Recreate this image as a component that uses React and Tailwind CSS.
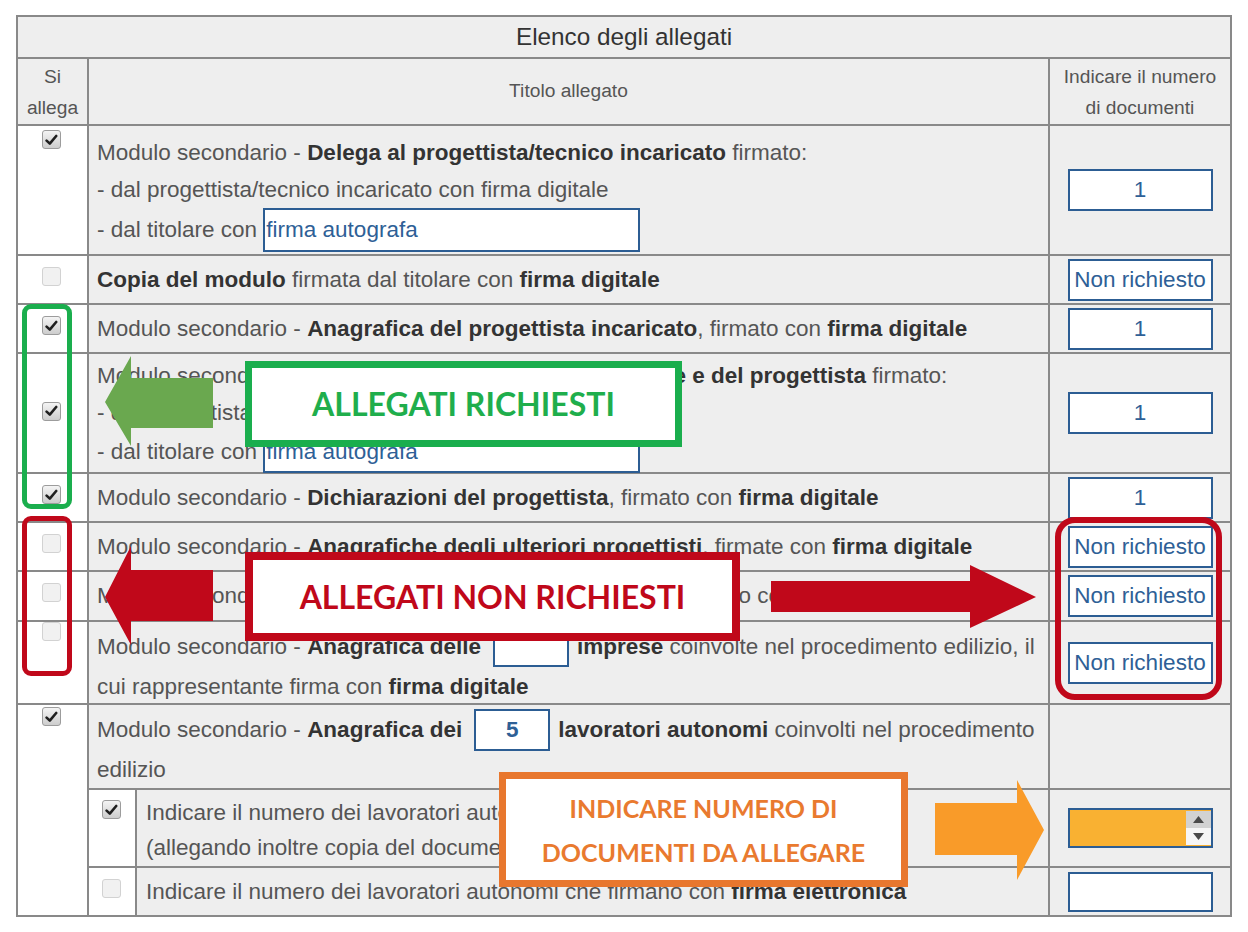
import React from 'react';

function Box({ checked }) {
  if (!checked) {
    return <span className="block h-[19px] w-[19px] rounded-[3px] border border-[#d2d2d2] bg-[#f1f1f1]" />;
  }
  return (
    <span className="flex h-[19px] w-[19px] items-center justify-center rounded-[3px] border border-[#9c9c9c] bg-linear-to-b from-[#f4f4f4] to-[#cdcdcd]">
      <svg width="13" height="12" viewBox="0 0 13 12">
        <path d="M1.6 6.6 L4.8 9.6 L11.2 2" stroke="#1f1f1f" strokeWidth="2.6" fill="none" strokeLinecap="round" strokeLinejoin="round" />
      </svg>
    </span>
  );
}

function Num({ children }) {
  return (
    <div className="flex h-[42px] w-[145px] items-center justify-center whitespace-nowrap border-2 border-[#2c5d93] bg-white text-[#2e6096]">
      {children}
    </div>
  );
}

function B({ children }) {
  return <b className="font-bold text-[#333]">{children}</b>;
}

function Row({ checked, boxPos, textPos, children, right }) {
  return (
    <>
      <div className={`flex justify-center border-b-2 border-r-2 border-[#898989] bg-white pr-[3px] ${boxPos}`}>
        <Box checked={checked} />
      </div>
      <div className={`col-span-2 border-b-2 border-r-2 border-[#898989] bg-[#eeeeee] pl-2 ${textPos}`}>{children}</div>
      <div className="flex items-center justify-center border-b-2 border-r-2 border-[#898989] bg-[#eeeeee]">{right}</div>
    </>
  );
}

function Spin() {
  return (
    <div className="flex h-[40px] w-[145px] border-2 border-[#2c5d93] bg-[#f9b132]">
      <div className="flex-1" />
      <div className="flex w-[25px] flex-col py-px">
        <div className="flex flex-1 items-center justify-center bg-[#d2d2d2]">
          <svg width="11" height="7" viewBox="0 0 11 7"><polygon points="0,7 5.5,0 11,7" fill="#4a4a4a" /></svg>
        </div>
        <div className="flex flex-1 items-center justify-center bg-[#f6f6f6]">
          <svg width="11" height="7" viewBox="0 0 11 7"><polygon points="0,0 11,0 5.5,7" fill="#4a4a4a" /></svg>
        </div>
      </div>
    </div>
  );
}

export default function App() {
  return (
    <div className="relative min-h-[932px] w-[1248px] bg-white font-['Liberation_Sans',Arial,sans-serif] text-[22.5px] text-[#555]">
      <div className="pl-[16px] pt-[15px]">
        <div className="grid w-[1216px] grid-cols-[71px_48px_913px_182px] grid-rows-[42px_67px_130px_49px_49px_120px_49px_49px_50px_83px_85px_78px_49px] border-l-2 border-t-2 border-[#898989]">
          {/* intestazione */}
          <div className="col-span-4 flex items-center justify-center border-b-2 border-r-2 border-[#898989] bg-[#eeeeee] text-[24.3px] text-[#333]">
            Elenco degli allegati
          </div>
          <div className="flex flex-col items-center justify-center border-b-2 border-r-2 border-[#898989] bg-[#eeeeee] text-[19.2px] leading-[31px]">
            <span>Si</span>
            <span>allega</span>
          </div>
          <div className="col-span-2 flex items-center justify-center border-b-2 border-r-2 border-[#898989] bg-[#eeeeee] text-[19.2px]">
            Titolo allegato
          </div>
          <div className="flex flex-col items-center justify-center border-b-2 border-r-2 border-[#898989] bg-[#eeeeee] text-[19.2px] leading-[31px]">
            <span>Indicare il numero</span>
            <span>di documenti</span>
          </div>

          <Row checked boxPos="items-start pt-[4px]" textPos="pt-[8px]" right={<Num>1</Num>}>
            <div className="leading-[37px]">
              Modulo secondario - <B>Delega al progettista/tecnico incaricato</B> firmato:
            </div>
            <div className="leading-[37px]">- dal progettista/tecnico incaricato con firma digitale</div>
            <div className="flex h-[44px] items-center whitespace-pre">
              {'- dal titolare con '}
              <span className="flex h-[44px] w-[377px] items-center border-2 border-[#2c5d93] bg-white pl-[1px] text-[#2e6096]">firma autografa</span>
            </div>
          </Row>

          <Row boxPos="items-center pb-[6px]" textPos="flex items-center" right={<Num>Non richiesto</Num>}>
            <div>
              <B>Copia del modulo</B> firmata dal titolare con <B>firma digitale</B>
            </div>
          </Row>

          <Row checked boxPos="items-center pb-[6px]" textPos="flex items-center" right={<Num>1</Num>}>
            <div>
              Modulo secondario - <B>Anagrafica del progettista incaricato</B>, firmato con <B>firma digitale</B>
            </div>
          </Row>

          <Row checked boxPos="items-center pb-[4px]" textPos="pt-[3px]" right={<Num>1</Num>}>
            <div className="leading-[37px]">
              Modulo secondario - <B>Dichiarazioni sostitutive del titolare e del progettista</B> firmato:
            </div>
            <div className="leading-[37px]">- dal progettista/tecnico incaricato con firma digitale</div>
            <div className="flex h-[42px] items-center whitespace-pre">
              {'- dal titolare con '}
              <span className="flex h-[42px] w-[377px] items-center border-2 border-[#2c5d93] bg-white pl-[1px] text-[#2e6096]">firma autografa</span>
            </div>
          </Row>

          <Row checked boxPos="items-center pb-[6px]" textPos="flex items-center" right={<Num>1</Num>}>
            <div>
              Modulo secondario - <B>Dichiarazioni del progettista</B>, firmato con <B>firma digitale</B>
            </div>
          </Row>

          <Row boxPos="items-center pb-[6px]" textPos="flex items-center" right={<Num>Non richiesto</Num>}>
            <div>
              Modulo secondario - <B>Anagrafiche degli ulteriori progettisti</B>, firmate con <B>firma digitale</B>
            </div>
          </Row>

          <Row boxPos="items-center pb-[8px]" textPos="flex items-center" right={<Num>Non richiesto</Num>}>
            <div className="whitespace-nowrap">
              Modulo secondario - <B>Dichiarazioni degli altri progettisti</B>, firmato con <B>firma digitale</B>
            </div>
          </Row>

          <Row boxPos="items-start" textPos="pt-[4px]" right={<Num>Non richiesto</Num>}>
            <div className="flex h-[42px] items-center whitespace-pre">
              {'Modulo secondario - '}
              <B>Anagrafica delle</B>
              <span className="ml-[12px] mr-[8px] h-[40px] w-[76px] border-2 border-[#2c5d93] bg-white" />
              <B>imprese</B>
              {' coinvolte nel procedimento edilizio, il'}
            </div>
            <div className="leading-[37px]">
              cui rappresentante firma con <B>firma digitale</B>
            </div>
          </Row>

          {/* lavoratori autonomi */}
          <div className="row-span-3 flex items-start justify-center border-b-2 border-r-2 border-[#898989] bg-white pr-[3px] pt-[2px]">
            <Box checked />
          </div>
          <div className="col-span-2 border-b-2 border-r-2 border-[#898989] bg-[#eeeeee] pl-2 pt-[4px]">
            <div className="flex h-[42px] items-center whitespace-pre">
              {'Modulo secondario - '}
              <B>Anagrafica dei</B>
              <span className="ml-[12px] mr-[8px] flex h-[42px] w-[76px] items-center justify-center border-2 border-[#2c5d93] bg-white font-bold text-[#2e6096]">
                5
              </span>
              <B>lavoratori autonomi</B>
              {' coinvolti nel procedimento'}
            </div>
            <div className="leading-[37px]">edilizio</div>
          </div>
          <div className="border-b-2 border-r-2 border-[#898989] bg-[#eeeeee]" />

          <div className="flex items-start justify-center border-b-2 border-r-2 border-[#898989] bg-white pr-[2px] pt-[10px]">
            <Box checked />
          </div>
          <div className="border-b-2 border-r-2 border-[#898989] bg-[#eeeeee] pl-[9px] pt-[5px] leading-[35px]">
            <div>
              Indicare il numero dei lavoratori autonomi che firmano con <B>firma autografa</B>
            </div>
            <div>(allegando inoltre copia del documento di identità)</div>
          </div>
          <div className="flex items-center justify-center border-b-2 border-r-2 border-[#898989] bg-[#eeeeee]">
            <Spin />
          </div>

          <div className="flex items-start justify-center border-b-2 border-r-2 border-[#898989] bg-white pr-[2px] pt-[11px]">
            <Box />
          </div>
          <div className="flex items-center border-b-2 border-r-2 border-[#898989] bg-[#eeeeee] pl-[9px]">
            <div>
              Indicare il numero dei lavoratori autonomi che firmano con <B>firma elettronica</B>
            </div>
          </div>
          <div className="flex items-center justify-center border-b-2 border-r-2 border-[#898989] bg-[#eeeeee]">
            <div className="h-[40px] w-[145px] border-2 border-[#2c5d93] bg-white" />
          </div>
        </div>
      </div>

      {/* annotazioni verdi */}
      <div className="absolute left-[22px] top-[304px] h-[205px] w-[50px] rounded-[9px] border-[5px] border-[#1aae4d]" />
      <svg className="absolute left-[105px] top-[356px]" width="108" height="90" viewBox="0 0 108 90">
        <polygon points="0,46 26,0 26,22 108,22 108,72 26,72 26,90" fill="#6aa84f" />
      </svg>
      <div className="absolute left-[245px] top-[361px] flex h-[86px] w-[437px] items-center justify-center border-[7px] border-[#1aae4d] bg-white font-['Lato',sans-serif] text-[32px] font-bold text-[#1fae4c]">
        ALLEGATI RICHIESTI
      </div>

      {/* annotazioni rosse */}
      <div className="absolute left-[22px] top-[516px] h-[160px] w-[50px] rounded-[9px] border-[5px] border-[#c0081a]" />
      <svg className="absolute left-[105px] top-[546px]" width="108" height="99" viewBox="0 0 108 99">
        <polygon points="0,51 26,0 26,24 108,24 108,75 26,75 26,99" fill="#c0081a" />
      </svg>
      <div className="absolute left-[245px] top-[552px] flex h-[89px] w-[495px] items-center justify-center border-[8px] border-[#c0081a] bg-white font-['Lato',sans-serif] text-[32px] font-bold text-[#c0081a]">
        ALLEGATI NON RICHIESTI
      </div>
      <svg className="absolute left-[771px] top-[565px]" width="265" height="63" viewBox="0 0 265 63">
        <polygon points="0,16 199,16 199,0 265,32 199,63 199,47 0,47" fill="#c0081a" />
      </svg>
      <div className="absolute left-[1055px] top-[517px] h-[183px] w-[167px] rounded-[20px] border-[6px] border-[#c0081a]" />

      {/* annotazioni arancioni */}
      <div className="absolute left-[499px] top-[772px] flex h-[115px] w-[409px] flex-col items-center justify-center border-[7px] border-[#e8772e] bg-white font-['Lato',sans-serif] text-[25px] font-bold leading-[44px] text-[#e97a2f]">
        <span>INDICARE NUMERO DI</span>
        <span>DOCUMENTI DA ALLEGARE</span>
      </div>
      <svg className="absolute left-[935px] top-[780px]" width="109" height="100" viewBox="0 0 109 100">
        <polygon points="0,23 82,23 82,0 109,50 82,100 82,75 0,75" fill="#f99b29" />
      </svg>
    </div>
  );
}
